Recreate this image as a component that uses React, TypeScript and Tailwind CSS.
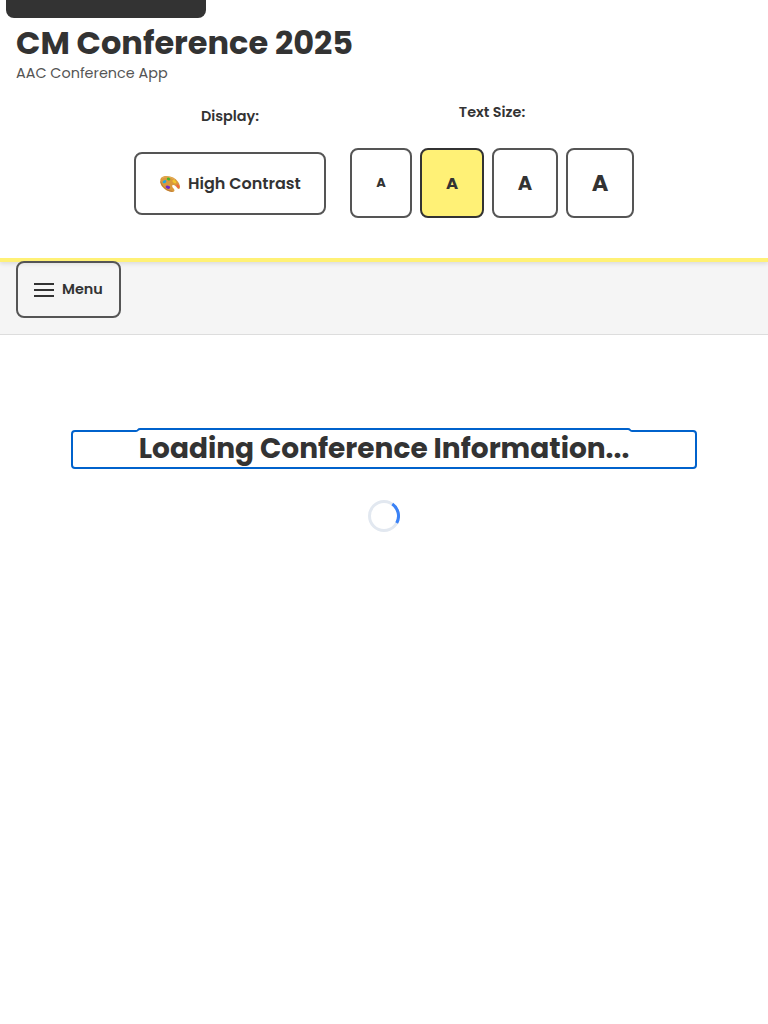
import React from "react";

const sizes = [
  { box: "w-[62px]", text: "text-[13px]", active: false },
  { box: "w-16 pt-0.5", text: "text-[16.5px]", active: true },
  { box: "w-[66px] pt-0.5", text: "text-[19.6px]", active: false },
  { box: "w-[68px] pt-0.5", text: "text-[22.6px]", active: false },
];

function Palette() {
  return (
    <svg width="22" height="18" viewBox="0 0 22 18" className="-ml-px shrink-0">
      <path
        d="M1.3 5.2C1.3 2.5 4 .9 7.8 1C12.5 1 16.5 3.1 19 6.8C20.6 9.2 21.7 12 20.7 13.5C20 14.5 18.9 13.8 18 12.7C17 11.4 15.6 9.7 14 10C12.2 10.4 13.7 12.5 14.8 13.8C16.2 15.6 15.5 17 13.4 17C9.8 17.1 5.6 14.9 3.1 11.6C1.6 9.7 1.3 7.4 1.3 5.2Z"
        fill="#d99a3d"
      />
      <path d="M1.5 6.5C2.4 10.5 7 15.8 13.4 16.4" fill="none" stroke="#b06f32" strokeWidth=".8" />
      <path d="M3 3.2C6 1 12 1.6 16 5" fill="none" stroke="#e8b45c" strokeWidth=".8" />
      <ellipse cx="5.5" cy="6.7" rx="2" ry="1.4" fill="#20a9df" transform="rotate(-30 5.5 6.7)" />
      <ellipse cx="9.6" cy="4.1" rx="1.8" ry="1.4" fill="#43b52d" transform="rotate(25 9.6 4.1)" />
      <ellipse cx="15.4" cy="6.6" rx="2.2" ry="1.4" fill="#f4c62b" transform="rotate(35 15.4 6.6)" />
      <ellipse cx="8.9" cy="12.2" rx="2.3" ry="1.6" fill="#7326c9" transform="rotate(15 8.9 12.2)" />
      <ellipse cx="18.9" cy="11.1" rx="2" ry="1.1" fill="#f36145" transform="rotate(55 18.9 11.1)" />
    </svg>
  );
}

export default function App() {
  return (
    <div className="relative min-h-screen overflow-hidden bg-white font-['Poppins','Inter',sans-serif] text-[#333]">
      <a href="#main" aria-label="Main content" className="absolute left-1.5 top-0 h-[18px] w-[200px] rounded-b-lg bg-[#333]" />
      <header className="relative z-10 flex h-[262px] flex-col border-b-4 border-[#fff176] px-4 pt-[22px] shadow-[0_2px_4px_rgba(0,0,0,0.1)]">
        <h1 className="h-10 whitespace-nowrap text-[32px] font-bold leading-[42px]">CM Conference 2025</h1>
        <p className="h-[22px] whitespace-nowrap text-[14.4px] leading-[22px] text-[#555]">AAC Conference App</p>
        <div className="mt-4 flex justify-center gap-6">
          <div className="flex w-48 flex-col items-center pt-1">
            <span className="h-6 text-[14.4px] font-semibold leading-6">Display:</span>
            <button className="mt-6 flex h-[63px] w-48 items-center gap-[7px] rounded-lg border-2 border-[#555] pl-6">
              <Palette />
              <span className="whitespace-nowrap text-[16px] font-semibold">High Contrast</span>
            </button>
          </div>
          <div className="flex flex-col items-center">
            <span className="h-6 text-[14.4px] font-semibold leading-6">Text Size:</span>
            <div className="mt-6 flex gap-2">
              {sizes.map((s) => (
                <button
                  key={s.box}
                  className={`h-[70px] rounded-lg border-2 font-bold ${s.box} ${s.text} ${s.active ? "border-[#333] bg-[#fff176]" : "border-[#555]"}`}
                >
                  A
                </button>
              ))}
            </div>
          </div>
        </div>
      </header>
      <nav className="flex h-[73px] items-start border-b border-[#ddd] bg-[#f5f5f5] px-4">
        <button className="relative z-20 -mt-px flex h-[57px] w-[105px] items-center gap-2 rounded-lg border-2 border-[#555] pl-4">
          <span className="flex w-5 flex-col gap-1">
            <span className="h-0.5 bg-[#333]" />
            <span className="h-0.5 bg-[#333]" />
            <span className="h-0.5 bg-[#333]" />
          </span>
          <span className="text-[14.4px] font-semibold">Menu</span>
        </button>
      </nav>
      <main id="main" className="flex flex-col items-center pt-[93px]">
        <div className="relative flex h-[41px] w-[626px] justify-center">
          <h2 className="whitespace-nowrap text-[28px] font-bold leading-[41px]">Loading Conference Information...</h2>
          <svg className="absolute left-0 top-0" width="626" height="42" fill="none" stroke="#0062cc" strokeWidth="2">
            <path d="M4 3H65C67.5 3 66.5 1 69 1H557C559.5 1 558.5 3 561 3H622Q625 3 625 6V37Q625 40 622 40H4Q1 40 1 37V6Q1 3 4 3Z" />
          </svg>
        </div>
        <svg className="mt-[31px]" width="32" height="32" fill="none" strokeWidth="3">
          <circle cx="16" cy="16" r="14.5" stroke="#e2e8f0" />
          <path d="M24.3 4.1A14.5 14.5 0 0 1 28.7 23" stroke="#3b82f6" />
        </svg>
      </main>
    </div>
  );
}
